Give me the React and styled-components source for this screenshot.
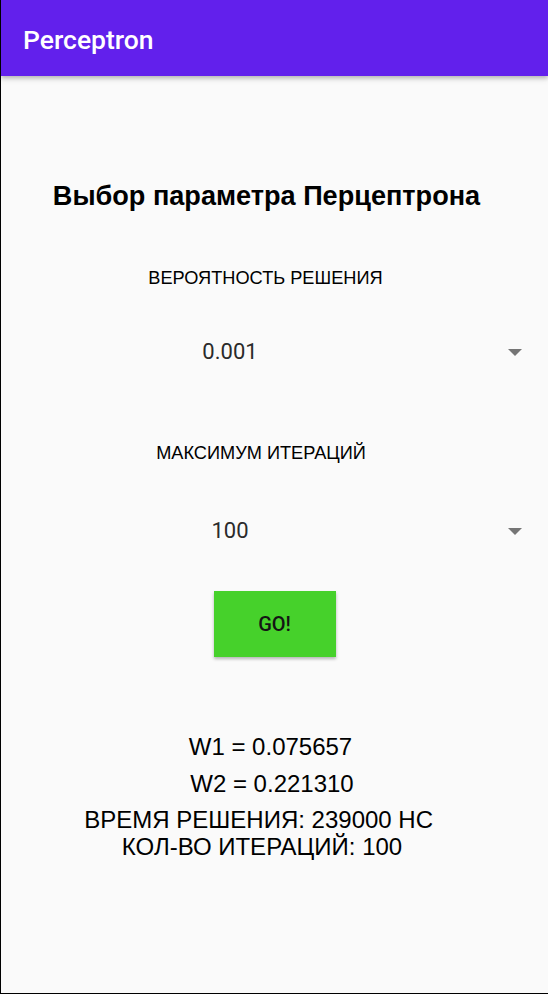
import React from "react";
import styled, { createGlobalStyle } from "styled-components";

const Global = createGlobalStyle`
  html, body { margin: 0; padding: 0; background: #fafafa; }
  * { box-sizing: border-box; }
`;

const Screen = styled.div`
  width: 548px;
  height: 994px;
  border-left: 1px solid #000;
  border-bottom: 1px solid #000;
  background: #fafafa;
  display: flex;
  flex-direction: column;
  overflow: hidden;
`;

const Toolbar = styled.header`
  position: relative;
  height: 76px;
  flex-shrink: 0;
  background: #6220ec;
  padding: 24px 0 0 22px;
  box-shadow: 0 2px 4px rgba(0, 0, 0, 0.22), 0 4px 6px rgba(0, 0, 0, 0.08);
  z-index: 1;
`;

const ToolbarTitle = styled.h1`
  margin: 0;
  font-family: Roboto, "Noto Sans", sans-serif;
  font-weight: 500;
  font-size: 26.5px;
  line-height: 32px;
  color: #fff;
`;

const Content = styled.main`
  display: flex;
  flex-direction: column;
  align-items: stretch;
`;

const Heading = styled.h2`
  margin: 105px 0 0;
  padding-right: 16px;
  text-align: center;
  font-family: "Liberation Sans", Arial, sans-serif;
  font-weight: 700;
  font-size: 27.1px;
  line-height: 30px;
  color: #000;
`;

const Label = styled.div`
  margin-top: ${(p) => p.$top}px;
  padding-right: ${(p) => p.$shift}px;
  text-align: center;
  font-family: "Liberation Sans", Arial, sans-serif;
  font-size: 18.2px;
  line-height: 21px;
  color: #000;
`;

const SpinnerRow = styled.div`
  margin-top: ${(p) => p.$top}px;
  height: 26px;
  display: flex;
  align-items: center;
`;

const SpinnerValue = styled.div`
  flex: 1;
  margin-right: 49px;
  text-align: center;
  font-family: Roboto, "Noto Sans", sans-serif;
  font-size: 22px;
  line-height: 26px;
  color: #2a2a2a;
`;

const Arrow = styled.svg`
  width: 14px;
  height: 7px;
  margin-right: 26px;
  flex-shrink: 0;
`;

const GoButton = styled.button`
  align-self: center;
  margin-top: 47px;
  width: 122px;
  height: 66px;
  border: none;
  border-radius: 0;
  background: #46d12b;
  box-shadow: 0 2px 3px rgba(0, 0, 0, 0.28);
  font-family: Roboto, "Noto Sans", sans-serif;
  font-weight: 500;
  font-size: 20px;
  color: #141414;
  padding: 0;
  display: flex;
  align-items: center;
  justify-content: center;
`;

const Result = styled.div`
  margin-top: ${(p) => p.$top}px;
  padding-right: ${(p) => p.$shift}px;
  text-align: center;
  font-family: "Liberation Sans", Arial, sans-serif;
  font-size: 24px;
  line-height: ${(p) => p.$lh || 28}px;
  color: #000;
  white-space: pre;
`;

function Spinner({ value, top }) {
  return (
    <SpinnerRow $top={top}>
      <SpinnerValue>{value}</SpinnerValue>
      <Arrow viewBox="0 0 14 7">
        <polygon points="0,0 14,0 7,7" fill="#757575" />
      </Arrow>
    </SpinnerRow>
  );
}

export default function App() {
  return (
    <>
      <Global />
      <Screen>
        <Toolbar>
          <ToolbarTitle>Perceptron</ToolbarTitle>
        </Toolbar>
        <Content>
          <Heading>Выбор параметра Перцептрона</Heading>
          <Label $top={57} $shift={18}>ВЕРОЯТНОСТЬ РЕШЕНИЯ</Label>
          <Spinner value="0.001" top={50} />
          <Label $top={78} $shift={27}>МАКСИМУМ ИТЕРАЦИЙ</Label>
          <Spinner value="100" top={54} />
          <GoButton>GO!</GoButton>
          <Result $top={76} $shift={8}>W1 = 0.075657</Result>
          <Result $top={9} $shift={5}>W2 = 0.221310</Result>
          <Result $top={9} $shift={25} $lh={26.7}>
            {"ВРЕМЯ РЕШЕНИЯ: 239000 НС \nКОЛ-ВО ИТЕРАЦИЙ: 100"}
          </Result>
        </Content>
      </Screen>
    </>
  );
}
